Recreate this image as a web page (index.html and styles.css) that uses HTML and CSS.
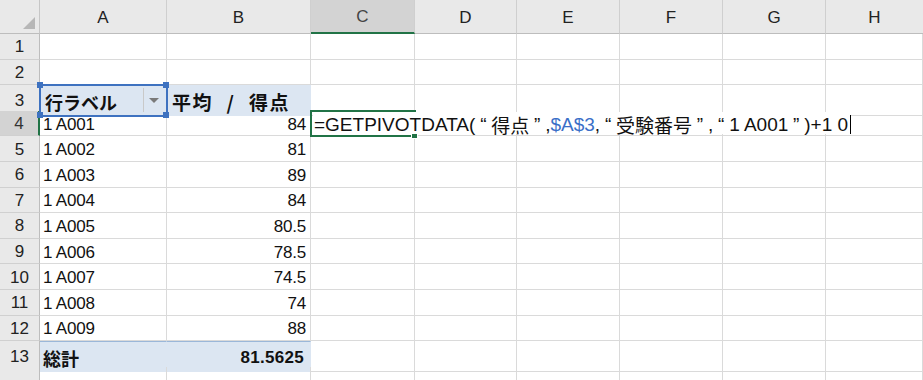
FILE: index.html
```html
<!DOCTYPE html>
<html lang="ja">
<head>
<meta charset="utf-8">
<link rel="stylesheet" href="styles.css">
</head>
<body>
<div class="sheet">
  <div class="row hrow">
    <div class="corner"><span class="tri"></span></div>
    <div class="ch">A</div><div class="ch">B</div><div class="ch sel">C</div><div class="ch">D</div><div class="ch">E</div><div class="ch">F</div><div class="ch">G</div><div class="ch last">H</div>
  </div>
  <div class="row"><div class="rh">1</div><div class="c"></div><div class="c"></div><div class="c"></div><div class="c"></div><div class="c"></div><div class="c"></div><div class="c"></div><div class="c"></div></div>
  <div class="row"><div class="rh">2</div><div class="c"></div><div class="c"></div><div class="c"></div><div class="c"></div><div class="c"></div><div class="c"></div><div class="c"></div><div class="c"></div></div>
  <div class="row"><div class="rh">3</div>
    <div class="c pv bold a3">行ラベル<span class="dd"><span class="ddarrow"></span></span>
      <span class="hdl tl"></span><span class="hdl tr"></span><span class="hdl bl"></span><span class="hdl br"></span>
    </div>
    <div class="c pv bold avg">平均<span class="sl">/</span>得点</div><div class="c"></div><div class="c"></div><div class="c"></div><div class="c"></div><div class="c"></div><div class="c"></div></div>
  <div class="row r4"><div class="rh sel">4</div><div class="c">1 A001</div><div class="c num">84</div>
    <div class="c edit">
      <div class="editor">=GETPIVOTDATA(<span class="q">“</span>得点<span class="q">”</span>,<span class="ref">$A$3</span>,<span class="q">“</span>受験番号<span class="q">”</span>,<span class="q">“</span>1 A001<span class="q">”</span>)+1 0<span class="caret"></span></div>
      <span class="fill"></span>
    </div>
    <div class="c"></div><div class="c"></div><div class="c"></div><div class="c"></div><div class="c"></div></div>
  <div class="row"><div class="rh">5</div><div class="c">1 A002</div><div class="c num">81</div><div class="c"></div><div class="c"></div><div class="c"></div><div class="c"></div><div class="c"></div><div class="c"></div></div>
  <div class="row"><div class="rh">6</div><div class="c">1 A003</div><div class="c num">89</div><div class="c"></div><div class="c"></div><div class="c"></div><div class="c"></div><div class="c"></div><div class="c"></div></div>
  <div class="row"><div class="rh">7</div><div class="c">1 A004</div><div class="c num">84</div><div class="c"></div><div class="c"></div><div class="c"></div><div class="c"></div><div class="c"></div><div class="c"></div></div>
  <div class="row"><div class="rh">8</div><div class="c">1 A005</div><div class="c num">80.5</div><div class="c"></div><div class="c"></div><div class="c"></div><div class="c"></div><div class="c"></div><div class="c"></div></div>
  <div class="row"><div class="rh">9</div><div class="c">1 A006</div><div class="c num">78.5</div><div class="c"></div><div class="c"></div><div class="c"></div><div class="c"></div><div class="c"></div><div class="c"></div></div>
  <div class="row"><div class="rh">10</div><div class="c">1 A007</div><div class="c num">74.5</div><div class="c"></div><div class="c"></div><div class="c"></div><div class="c"></div><div class="c"></div><div class="c"></div></div>
  <div class="row"><div class="rh">11</div><div class="c">1 A008</div><div class="c num">74</div><div class="c"></div><div class="c"></div><div class="c"></div><div class="c"></div><div class="c"></div><div class="c"></div></div>
  <div class="row"><div class="rh">12</div><div class="c">1 A009</div><div class="c num">88</div><div class="c"></div><div class="c"></div><div class="c"></div><div class="c"></div><div class="c"></div><div class="c"></div></div>
  <div class="row"><div class="rh">13</div><div class="c pv tot bold">総計</div><div class="c pv tot bold num">81.5625</div><div class="c"></div><div class="c"></div><div class="c"></div><div class="c"></div><div class="c"></div><div class="c"></div></div>
  <div class="row last"><div class="rh"></div><div class="c"></div><div class="c"></div><div class="c"></div><div class="c"></div><div class="c"></div><div class="c"></div><div class="c"></div><div class="c"></div></div>
</div>
</body>
</html>
```

FILE: styles.css
```css
* { box-sizing: border-box; }
html, body { margin: 0; padding: 0; background: #fff; overflow: hidden; }
body { width: 923px; height: 380px; font-family: "Liberation Sans", "Noto Sans CJK JP", sans-serif; color: #111; }

.sheet { display: flex; flex-direction: column; }
.row {
  display: grid;
  grid-template-columns: 40px 127px 144px 104px 102px 103px 103px 103px 97px;
  height: 25.6px;
}
.hrow { height: 34px; }
.row.last { height: 20px; }

.corner {
  background: #e9e9e9;
  border-right: 1px solid #c6c6c6;
  border-bottom: 1px solid #bdbdbd;
  position: relative;
}
.tri {
  position: absolute; right: 4px; bottom: 4px;
  width: 0; height: 0;
  border-left: 12px solid transparent;
  border-bottom: 12px solid #b7b7b7;
}
.ch {
  background: #e9e9e9;
  border-right: 1px solid #cfcfcf;
  border-bottom: 1px solid #bdbdbd;
  display: flex; align-items: center; justify-content: center;
  font-size: 17px; color: #222;
  padding-top: 2px;
}
.ch.sel { background: #d3d3d3; border-bottom: 2px solid #217346; color: #444; }
.ch.last { border-right: none; }

.rh {
  background: #e9e9e9;
  border-right: 1px solid #bdbdbd;
  border-bottom: 1px solid #d0d0d0;
  display: flex; align-items: center; justify-content: center;
  font-size: 17px; color: #222;
  padding-top: 2px;
}
.rh.sel { background: #d3d3d3; border-right: 2px solid #217346; color: #333; }

.c {
  border-right: 1px solid #dadada;
  border-bottom: 1px solid #dadada;
  font-size: 17px;
  display: flex; align-items: center;
  padding: 3px 2px 0 3px;
  white-space: nowrap;
  position: relative;
  letter-spacing: -0.2px;
}
.num { justify-content: flex-end; padding-right: 4px; }
.bold { font-weight: bold; font-family: "Noto Sans CJK JP", sans-serif; font-size: 18px; letter-spacing: 0; }
.avg { font-size: 19px; letter-spacing: 1.5px; padding-left: 5px; }
.num.bold { font-family: "Liberation Sans", sans-serif; font-size: 17px; letter-spacing: 0.3px; padding-right: 6px; }
.sl { display: inline-block; width: 36px; text-align: center; }
.pv { background: #dce6f2; border-right-color: #dce6f2; border-bottom-color: #dce6f2; }
.tot { border-top: 1px solid #9bb7d9; }

.a3 {
  outline: 2px solid #3e72c0;
  outline-offset: -1px;
  z-index: 3;
  padding-left: 5px;
}
.dd {
  position: absolute; right: 3px; top: 3px; bottom: 3px; width: 20px;
  border-left: 1px solid #c9c9c9;
  display: flex; align-items: center; justify-content: center;
}
.ddarrow {
  width: 0; height: 0;
  border-left: 5px solid transparent; border-right: 5px solid transparent;
  border-top: 5px solid #7a7a7a;
}
.hdl { position: absolute; width: 6px; height: 6px; background: #3e72c0; }
.hdl.tl { left: -3px; top: -3px; }
.hdl.tr { right: -3px; top: -3px; }
.hdl.bl { left: -3px; bottom: -3px; }
.hdl.br { right: -3px; bottom: -3px; }

.r4 { position: relative; z-index: 2; }
.edit { outline: 2px solid #217346; outline-offset: -1px; padding: 0; overflow: visible; }
.editor {
  position: absolute; left: 2px; top: 1px; bottom: 1px;
  width: 538px;
  background: #fff;
  display: flex; align-items: center;
  font-size: 19px;
  letter-spacing: 0;
  padding-left: 1px;
  padding-top: 3px;
  font-family: "Liberation Sans", "Noto Sans CJK JP", sans-serif;
  z-index: 2;
}
.q { display: inline-block; width: 16px; text-align: center; }
.ref { color: #3a6fc8; }
.caret { display: inline-block; width: 1px; height: 19px; background: #000; margin-left: 2px; }
.fill {
  position: absolute; right: -4px; bottom: -4px;
  width: 7px; height: 6px; background: #217346;
  border: 1px solid #fff;
  z-index: 3;
}
```
